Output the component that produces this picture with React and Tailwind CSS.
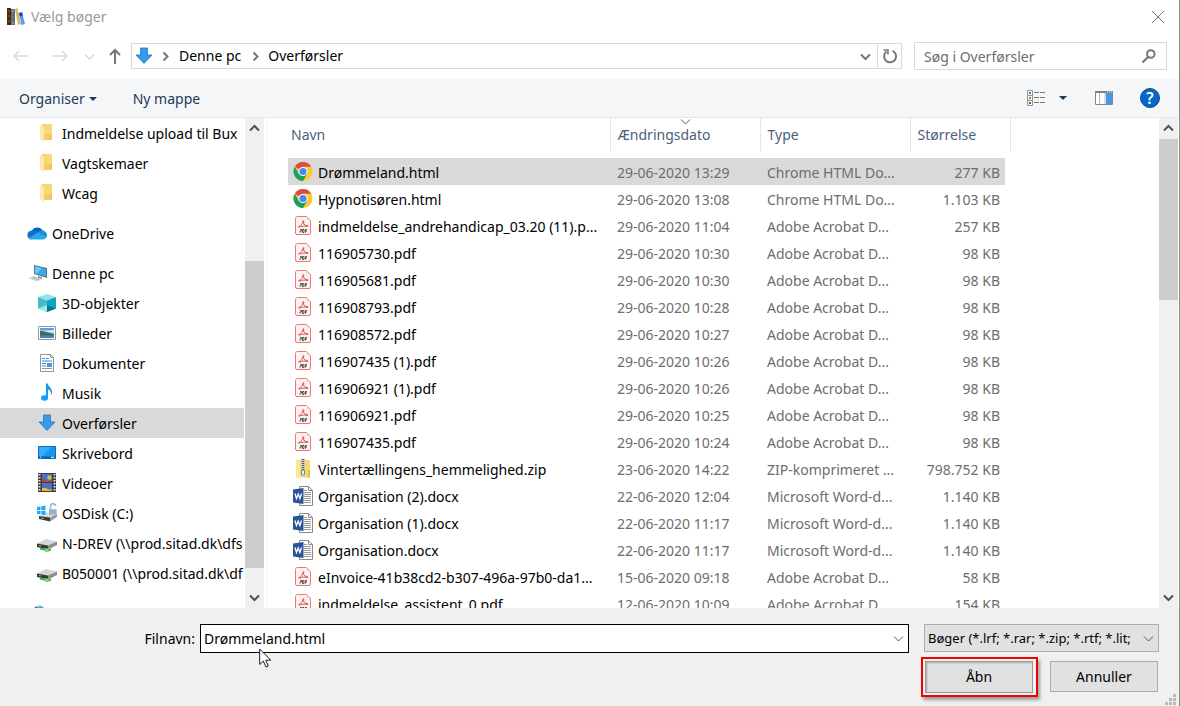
import { useState } from 'react';

const PLACES = [
  { label: 'Indmeldelse upload til Bux', icon: 'folder', level: 1 },
  { label: 'Vagtskemaer', icon: 'folder', level: 1 },
  { label: 'Wcag', icon: 'folder', level: 1 },
  { label: 'OneDrive', icon: 'onedrive', level: 0 },
  { label: 'Denne pc', icon: 'pc', level: 0 },
  { label: '3D-objekter', icon: 'cube', level: 1 },
  { label: 'Billeder', icon: 'pictures', level: 1 },
  { label: 'Dokumenter', icon: 'document', level: 1 },
  { label: 'Musik', icon: 'music', level: 1 },
  { label: 'Overførsler', icon: 'download', level: 1 },
  { label: 'Skrivebord', icon: 'desktop', level: 1 },
  { label: 'Videoer', icon: 'video', level: 1 },
  { label: 'OSDisk (C:)', icon: 'osdisk', level: 1 },
  { label: 'N-DREV (\\\\prod.sitad.dk\\dfs', icon: 'netdrive', level: 1 },
  { label: 'B050001 (\\\\prod.sitad.dk\\df', icon: 'netdrive', level: 1 },
];

const FILES = [
  { name: 'Drømmeland.html', date: '29-06-2020 13:29', type: 'Chrome HTML Do...', size: '277 KB', icon: 'chrome' },
  { name: 'Hypnotisøren.html', date: '29-06-2020 13:08', type: 'Chrome HTML Do...', size: '1.103 KB', icon: 'chrome' },
  { name: 'indmeldelse_andrehandicap_03.20 (11).p...', date: '29-06-2020 11:04', type: 'Adobe Acrobat D...', size: '257 KB', icon: 'pdf' },
  { name: '116905730.pdf', date: '29-06-2020 10:30', type: 'Adobe Acrobat D...', size: '98 KB', icon: 'pdf' },
  { name: '116905681.pdf', date: '29-06-2020 10:30', type: 'Adobe Acrobat D...', size: '98 KB', icon: 'pdf' },
  { name: '116908793.pdf', date: '29-06-2020 10:28', type: 'Adobe Acrobat D...', size: '98 KB', icon: 'pdf' },
  { name: '116908572.pdf', date: '29-06-2020 10:27', type: 'Adobe Acrobat D...', size: '98 KB', icon: 'pdf' },
  { name: '116907435 (1).pdf', date: '29-06-2020 10:26', type: 'Adobe Acrobat D...', size: '98 KB', icon: 'pdf' },
  { name: '116906921 (1).pdf', date: '29-06-2020 10:26', type: 'Adobe Acrobat D...', size: '98 KB', icon: 'pdf' },
  { name: '116906921.pdf', date: '29-06-2020 10:25', type: 'Adobe Acrobat D...', size: '98 KB', icon: 'pdf' },
  { name: '116907435.pdf', date: '29-06-2020 10:24', type: 'Adobe Acrobat D...', size: '98 KB', icon: 'pdf' },
  { name: 'Vintertællingens_hemmelighed.zip', date: '23-06-2020 14:22', type: 'ZIP-komprimeret ...', size: '798.752 KB', icon: 'zip' },
  { name: 'Organisation (2).docx', date: '22-06-2020 12:04', type: 'Microsoft Word-d...', size: '1.140 KB', icon: 'word' },
  { name: 'Organisation (1).docx', date: '22-06-2020 11:17', type: 'Microsoft Word-d...', size: '1.140 KB', icon: 'word' },
  { name: 'Organisation.docx', date: '22-06-2020 11:17', type: 'Microsoft Word-d...', size: '1.140 KB', icon: 'word' },
  { name: 'eInvoice-41b38cd2-b307-496a-97b0-da1...', date: '15-06-2020 09:18', type: 'Adobe Acrobat D...', size: '58 KB', icon: 'pdf' },
  { name: 'indmeldelse_assistent_0.pdf', date: '12-06-2020 10:09', type: 'Adobe Acrobat D...', size: '154 KB', icon: 'pdf' },
];

const ICONS = {
  folder: (
    <>
      <path d="M5 1h8v16H5Z" fill="#f3cd69" />
      <path d="M12 10h3v7h-3Z" fill="#f0c75c" />
      <path d="M6 1h9v10H6Z" fill="#f8d775" />
      <path d="M3 1.500 7 4v15l-4-2.500Z" fill="#fde9a9" />
    </>
  ),
  onedrive: (
    <>
      <path d="M5 7.500a6 6 0 0 1 10.500 0L18 11 8 15 3 10Z" fill="#0364b8" />
      <path d="M5 7.500c2-.8 4-.3 6 1.500L4 16.500C-1 15.500-1 8 5 7.500Z" fill="#0f6fd0" />
      <path d="M15.500 7.500c2.500 0 4.500 2.500 4.500 4.500 0 1-.3 2-1 2.500L10 9.500c1.500-1.500 3.500-2 5.500-2Z" fill="#1490df" />
      <path d="M1.500 15 11 9.500l8.500 4.500c-.8 1.700-2 2.500-3.500 2.500H4.500c-1.200 0-2.200-.500-3-1.500Z" fill="#28a8ea" />
    </>
  ),
  pc: (
    <>
      <path d="M7 2 20 5v10L7 11Z" fill="#5b7283" />
      <path d="M8 3.300 19 5.900v7.700L8 10.200Z" fill="#36aaf0" />
      <path d="M8 3.300 15 5l-5 5.800-2-.6Z" fill="#6cc6fa" />
      <path d="M11 13l4 1v2l-4-1Z" fill="#8b949b" />
      <path d="M1 15 7 13l8 3-5 2.500Z" fill="#cfd4d8" />
      <path d="M4 15l8 2M6 14l7 2.500" stroke="#a9b0b5" strokeWidth=".6" />
    </>
  ),
  cube: (
    <>
      <path d="M1 4 10 1l9 3-9 3.500Z" fill="#8fe3ea" />
      <path d="M1 4l9 3.500V19l-9-3.500Z" fill="#45bccb" />
      <path d="M19 4l-9 3.500V19l9-3.500Z" fill="#0aa3c2" />
      <path d="M1 15.500 10 12v7Z" fill="#9ce9ee" />
      <path d="M19 15.500 10 12v7Z" fill="#067b8a" />
    </>
  ),
  pictures: (
    <>
      <path d="M1.500 3.500h17v13h-17Z" fill="#fff" stroke="#8e979d" />
      <path d="M3 5h14v10H3Z" fill="#9ccaf2" />
      <path d="M3 5h14v2H3Z" fill="#5a9fe0" />
      <path d="M3 8c5 0 8 2 14 3v2H3Z" fill="#406a5c" />
      <path d="M3 12.500h14V15H3Z" fill="#4d86ac" />
      <path d="M8 9c3-1 5-1 9-2v2Z" fill="#e4f1fb" />
    </>
  ),
  document: (
    <>
      <path d="M3.500 1.500h10l3 3v14h-13Z" fill="#fff" stroke="#8e979d" />
      <path d="M13.500 1.500v3h3" fill="none" stroke="#8e979d" />
      <path d="M5 5.500h3M9 5.500h3M5 8h10M5 10.500h4M5 13h4" stroke="#2f91cf" strokeWidth="1.200" />
      <path d="M10 10h5v4h-5Z" fill="#5c8ec7" />
      <path d="M5 15.500h10" stroke="#8e979d" />
    </>
  ),
  music: (
    <>
      <ellipse cx="7.500" cy="15" rx="3.500" ry="2.800" fill="#129df2" />
      <path d="M9 .5h1.800c.5 3.500 5 4.500 4.200 9.500-.2 1-.6 1.600-1.100 2.200.8-3.700-1-5.200-2.900-5.700v8.500H9Z" fill="#129df2" />
    </>
  ),
  download: <path d="M6.500 2h7v7H18l-8 8.500L2 9h4.500Z" fill="#3a9aea" stroke="#2277c0" strokeWidth=".8" />,
  desktop: (
    <>
      <path d="M1.500 3.500h17v12h-17Z" fill="#1697f5" stroke="#0b6fb8" />
      <path d="M2 4h12L5 14H2Z" fill="#36aeff" />
      <path d="M2 13.500h16V15H2Z" fill="#06639f" />
      <path d="M3 14.300h1M14 14.300h3" stroke="#fff" />
    </>
  ),
  video: (
    <>
      <path d="M1 0h18v19H1Z" fill="#3d3d3d" />
      <path d="M5 1h10v8H5ZM5 10h10v8H5Z" fill="#3f74dc" />
      <path d="M2.500 1v17M17.500 1v17" stroke="#e8e8e8" strokeWidth="2" strokeDasharray="1.500 1.500" />
      <circle cx="12.500" cy="4.500" r="2.200" fill="#e9b52c" />
      <path d="M5 6c2-2 4 0 4 2l6-1v2H5Z" fill="#bd4734" />
      <path d="M10 11l3 3-3 1Z" fill="#cf4b2d" />
      <path d="M5 15h4l2 1.500h4V18H5Z" fill="#e7bc3b" />
    </>
  ),
  osdisk: (
    <>
      <path d="M2 13l8-3.500 10 1-7 4Z" fill="#dadada" />
      <path d="M2 13l11 1.500V18.500L2 16Z" fill="#3a3a3a" />
      <path d="M13 14.500l7-4v3.500l-7 4.500Z" fill="#999" />
      <path d="M4 15l3 .6" stroke="#46d65a" />
      <path d="M0 4 3.500 3.500V7H0ZM4.300 3.400 8.500 2.500V7H4.300ZM0 7.800h3.500v3.500L0 10.800ZM4.300 7.800h4.200v4.300l-4.200-.7Z" fill="#1cabec" />
      <path d="M13.500 6V3c0-3 5-3 5 0" fill="none" stroke="#a8b2b8" strokeWidth="1.500" />
      <path d="M12 6h7.500v6H12Z" fill="#a9c3d6" />
      <path d="M12 8h7.500M12 10h7.500" stroke="#7795aa" strokeWidth=".7" />
    </>
  ),
  netdrive: (
    <>
      <path d="M0 10.500 9 6 20 8.500 11 12.500Z" fill="#d4d4d4" />
      <path d="M0 10.500 11 12.500v4L0 14Z" fill="#3a3a3a" />
      <path d="M11 12.500 20 8.500V12l-9 4.500Z" fill="#8d8d8d" />
      <path d="M3 15.500l8 2 3-1" fill="none" stroke="#35b34a" strokeWidth="2" />
      <path d="M8 15.500h3.500v3.500H8Z" fill="#7ddc86" />
      <path d="M2 12.500l2 .4" stroke="#55e069" />
    </>
  ),
  network: (
    <>
      <circle cx="12" cy="9" r="6.500" fill="#5fa9c6" />
      <path d="M8 5c2-2 4-1 4 1l-2 3H7ZM14 4l3 3-2 3Z" fill="#2a7592" />
      <path d="M9 3.500 12 3v1.500Z" fill="#d9edf4" />
    </>
  ),
  chrome: (
    <>
      <circle cx="10" cy="9.500" r="9.500" fill="#fcc934" />
      <path d="M10 9.500 1.770 4.750A9.500 9.500 0 0 1 18.230 4.750H10Z" fill="#da4f43" />
      <path d="M1.770 4.750A9.500 9.500 0 0 0 10 19L14.100 11.900 10 9.500 5.900 11.900Z" fill="#1ba15f" />
      <circle cx="10" cy="9.500" r="4.600" fill="#fff" />
      <circle cx="10" cy="9.500" r="3.600" fill="#4587f3" />
    </>
  ),
  pdf: (
    <>
      <path d="M4.500.5h9l4 4V17a1.500 1.500 0 0 1-1.500 1.500H4A1.500 1.500 0 0 1 2.500 17V2.500c0-1 .8-2 2-2Z" fill="#f5f3f3" stroke="#f8736d" />
      <path d="M13.500.8v3.700h3.700Z" fill="#fbd8d5" />
      <path d="M6 10.500c2-.7 3.700-2.700 3.900-5 .1-1.800 1.200-1 .8.400-.5 2 .6 3.400 3.700 3.700 1.200.1.900 1.100-.4.900-2.300-.7-4.500-.6-6.800.3-1.200.5-2.200.2-1.200-.3Z" fill="none" stroke="#ef4a40" />
      <path d="M7 13.500h1.500v1.500H7v1.500M9.500 13.500v3h1.500v-3ZM12.500 16.500v-3H14M12.500 15H14" fill="none" stroke="#4a4444" strokeWidth=".9" />
    </>
  ),
  zip: (
    <>
      <path d="M3 1h14v17.500H3Z" fill="#f6da6c" />
      <path d="M3 1h4v17.500H3Z" fill="#fae894" />
      <path d="M15 11h2v7.500h-2Z" fill="#e4bd43" />
      <path d="M8 0h4v18H8Z" fill="#d5d5d0" />
      <path d="M10 0v11" stroke="#555" strokeWidth="2.500" strokeDasharray="1 1" />
      <rect x="8.500" y="11" width="3" height="5" rx="1" fill="#eee" stroke="#666" strokeWidth=".8" />
    </>
  ),
  word: (
    <>
      <path d="M6.500.5h9l4 4v15h-13Z" fill="#fff" stroke="#8a8a8a" />
      <path d="M15.500.5v4h4" fill="none" stroke="#8a8a8a" />
      <path d="M11 4.500h3M11 6.500h7M11 8.500h7M11 10.500h7M11 12.500h7M11 14.500h7M11 16.500h7" stroke="#9a9a9a" />
      <path d="M0 3.500 10.500 2v16L0 16.500Z" fill="#2a5699" />
      <path d="M2 7.500l1.500 5L5.200 8l1.700 4.500 1.600-5" fill="none" stroke="#fff" strokeWidth="1.300" />
    </>
  ),
};

function Icon({ name, className = '' }) {
  return (
    <svg viewBox="0 0 20 20" className={`h-5 w-5 shrink-0 ${className}`} aria-hidden="true">
      {ICONS[name]}
    </svg>
  );
}

function Chevron({ dir = 'down', className = '', width = 1 }) {
  const paths = { down: 'M1 3.500 5.500 8 10 3.500', up: 'M1 7.500 5.500 3 10 7.500', right: 'M3.500 1.500 7.500 5.500 3.500 9.500' };
  return (
    <svg viewBox="0 0 11 11" className={`h-[11px] w-[11px] shrink-0 ${className}`} fill="none" stroke="currentColor" strokeWidth={width} aria-hidden="true">
      <path d={paths[dir]} />
    </svg>
  );
}

function Scrollbar({ before, thumb }) {
  return (
    <div className="flex w-[19px] shrink-0 flex-col bg-[#f0f0f0] text-[#505050]">
      <button type="button" aria-label="Rul op" className="flex h-[21px] items-center justify-center">
        <Chevron dir="up" width={2} />
      </button>
      <div className="flex-1">
        <div style={{ height: before }} />
        <div className="bg-[#cdcdcd]" style={{ height: thumb }} />
      </div>
      <button type="button" aria-label="Rul ned" className="flex h-[21px] items-center justify-center">
        <Chevron width={2} />
      </button>
    </div>
  );
}

function TitleBar() {
  return (
    <header className="flex h-[33px] shrink-0 items-center pl-[7px] pr-[14px]">
      <svg viewBox="0 0 18 18" className="h-[18px] w-[18px]" aria-hidden="true">
        <path d="M0 0h4v17H0Z" fill="#4a2415" />
        <path d="M.5 3h3M.5 8h3M.5 13h3" stroke="#a1602e" />
        <path d="M4 1h4v16H4Z" fill="#5c7474" />
        <path d="M5 3h2M5 15h2" stroke="#a9bdb8" />
        <path d="M8 1l2.500-1L14 16l-3 1Z" fill="#dcb765" />
        <path d="M12 5l3-.8L18 16l-3.500 1Z" fill="#5b9bf5" />
        <path d="M12 5l3-.8.8 3.500-3 .8Z" fill="#1d3fa8" />
      </svg>
      <h1 className="ml-[6px] text-[14px] text-[#999]">Vælg bøger</h1>
      <button type="button" aria-label="Luk" className="ml-auto text-[#777]">
        <svg viewBox="0 0 14 14" className="h-[14px] w-[14px]" stroke="currentColor" aria-hidden="true">
          <path d="M1 1l12 12M13 1 1 13" />
        </svg>
      </button>
    </header>
  );
}

function NavBar() {
  return (
    <nav className="flex h-[46px] shrink-0 items-center pr-[12px]">
      <div className="flex w-[131px] shrink-0 items-center pl-[13px] text-[#d9d9d9]">
        <button type="button" aria-label="Tilbage">
          <svg viewBox="0 0 16 12" className="h-3 w-4" fill="none" stroke="currentColor" strokeWidth="1.500">
            <path d="M15.500 6H1M6 1 1 6l5 5" />
          </svg>
        </button>
        <button type="button" aria-label="Frem" className="ml-[23px]">
          <svg viewBox="0 0 16 12" className="h-3 w-4" fill="none" stroke="currentColor" strokeWidth="1.500">
            <path d="M.5 6H15M10 1l5 5-5 5" />
          </svg>
        </button>
        <button type="button" aria-label="Seneste placeringer" className="ml-4">
          <Chevron width={1.5} />
        </button>
        <button type="button" aria-label="Op" className="ml-[13px] text-[#777]">
          <svg viewBox="0 0 14 16" className="h-4 w-[14px]" fill="none" stroke="currentColor" strokeWidth="2">
            <path d="M7 16V2M2 7l5-5 5 5" />
          </svg>
        </button>
      </div>
      <div className="flex h-[26px] flex-1 items-center border border-[#d9d9d9]">
        <Icon name="download" className="ml-[2px]" />
        <Chevron dir="right" width={2} className="ml-[6px] text-[#777]" />
        <button type="button" className="ml-2">Denne pc</button>
        <Chevron dir="right" width={2} className="ml-[9px] text-[#777]" />
        <button type="button" className="ml-[7px]">Overførsler</button>
        <button type="button" aria-label="Tidligere placeringer" className="ml-auto mr-[6px] text-[#777]">
          <Chevron width={2} />
        </button>
        <button type="button" aria-label="Opdater" className="flex h-full w-6 items-center justify-center border-l border-[#d9d9d9] text-[#777]">
          <svg viewBox="0 0 16 16" className="h-4 w-4" fill="none" stroke="currentColor" strokeWidth="2">
            <path d="M10.500 2.800A6 6 0 1 1 4.500 3.500" />
            <path d="M1.500 2h4.500v4.500" strokeWidth="1.600" />
          </svg>
        </button>
      </div>
      <div className="ml-3 flex h-7 w-[253px] items-center border border-[#d9d9d9] pl-[9px] pr-[9px]">
        <input type="search" aria-label="Søg i Overførsler" placeholder="Søg i Overførsler" className="min-w-0 flex-1 pt-[2px] outline-none placeholder:text-[#6d6d6d]" />
        <svg viewBox="0 0 16 16" className="h-4 w-4 shrink-0 text-[#777]" fill="none" stroke="currentColor" aria-hidden="true">
          <circle cx="9.800" cy="6" r="3.800" strokeWidth="2" />
          <path d="M7 9 1.500 14.500" strokeWidth="2.200" />
        </svg>
      </div>
    </nav>
  );
}

function Toolbar() {
  return (
    <div className="flex h-[39px] shrink-0 items-center border-b border-[#e7e8ea] bg-[#f5f6f7] pl-[19px] pr-[19px] text-[#1e395b]">
      <button type="button" className="flex items-center pt-[2px]">
        Organiser
        <svg viewBox="0 0 8 4" className="ml-1 h-1 w-2" fill="currentColor" aria-hidden="true">
          <path d="M0 0h8L4 4Z" />
        </svg>
      </button>
      <button type="button" className="ml-9 pt-[2px]">Ny mappe</button>
      <button type="button" aria-label="Visning" className="ml-auto flex items-center">
        <svg viewBox="0 0 18 16" className="h-4 w-[18px]" fill="none" aria-hidden="true">
          <path d="M.5.5h5v15h-5ZM.5 5.500h5M.5 10.500h5" stroke="#949494" />
          <path d="M7 2.500h5M13 2.500h5M7 7.500h5M13 7.500h5M7 12.500h5M13 12.500h5" stroke="#777" />
          <path d="M2 2h2v2H2Z" fill="#3b86d4" />
          <path d="M2 7h2v2H2Z" fill="#a58a2e" />
          <path d="M2 12h2v2H2Z" fill="#cf3a23" />
        </svg>
        <svg viewBox="0 0 8 4" className="ml-[14px] h-1 w-2" fill="currentColor" aria-hidden="true">
          <path d="M0 0h8L4 4Z" />
        </svg>
      </button>
      <button type="button" aria-label="Vis eksempelrude" className="ml-7">
        <svg viewBox="0 0 18 14" className="h-[14px] w-[18px]" aria-hidden="true">
          <path d="M.5.5h17v13H.5Z" fill="#fff" stroke="#85898d" />
          <path d="M0 0h18v2H0Z" fill="#7d8185" />
          <path d="M12 1h1M14 1h1M16 1h1" stroke="#fff" />
          <path d="M4.500 2v11M10 2v11" stroke="#b5b8ba" />
          <path d="M11 2h6v11h-6Z" fill="#3f99e6" />
        </svg>
      </button>
      <button type="button" aria-label="Hjælp" className="ml-[27px] flex h-5 w-5 items-center justify-center rounded-full border border-[#0a4b8c] bg-[#0667c6] text-[16px] font-semibold text-white">
        ?
      </button>
    </div>
  );
}

function Sidebar() {
  return (
    <aside className="flex w-[264px] shrink-0">
      <ul className="min-w-0 flex-1 overflow-hidden">
        {PLACES.map((place) => (
          <li key={place.label} className={place.level === 0 ? 'mt-[10px]' : ''}>
            <button
              type="button"
              className={`flex h-[30px] w-[244px] items-center gap-[5px] overflow-hidden whitespace-nowrap ${
                place.level === 0 ? 'pl-[27px]' : 'pl-[37px]'
              } ${place.label === 'Overførsler' ? 'bg-[#d9d9d9]' : ''}`}
            >
              <Icon name={place.icon} />
              <span className="pt-[2px]">{place.label}</span>
            </button>
          </li>
        ))}
        <li className="mt-[10px] flex h-[30px] items-center pl-[27px]">
          <Icon name="network" />
        </li>
      </ul>
      <Scrollbar before={122} thumb={307} />
    </aside>
  );
}

function FileList({ selected, onSelect }) {
  return (
    <main className="ml-[3px] flex min-w-0 flex-1 border-l border-[#f3f3f3] pr-px">
      <div className="min-w-0 flex-1 overflow-hidden pl-[20px]">
        <table className="w-[722px] table-fixed border-collapse whitespace-nowrap text-left">
          <colgroup>
            <col className="w-[322px]" />
            <col className="w-[150px]" />
            <col className="w-[150px]" />
            <col className="w-[95px]" />
            <col className="w-[5px]" />
          </colgroup>
          <thead className="text-[#4c607a]">
            <tr className="h-[33px]">
              <th className="border-r border-[#e5e5e5] p-0 pl-[3px] font-normal">Navn</th>
              <th className="relative border-r border-[#e5e5e5] p-0 pl-[7px] font-normal" aria-sort="descending">
                <Chevron className="absolute left-[69px] top-[-2px]" />
                Ændringsdato
              </th>
              <th className="border-r border-[#e5e5e5] p-0 pl-[7px] font-normal">Type</th>
              <th colSpan="2" className="border-r border-[#e5e5e5] p-0 pl-[7px] font-normal">Størrelse</th>
            </tr>
          </thead>
          <tbody className="text-[#6d6d6d]">
            <tr className="h-[7px]" aria-hidden="true">
              <td colSpan="5" className="p-0" />
            </tr>
            {FILES.map((file) => {
              const bg = file.name === selected ? 'bg-[#d9d9d9]' : '';
              return (
                <tr key={file.name} className="h-[27px]" onClick={() => onSelect(file.name)}>
                  <td className={`p-0 pl-[5px] text-black ${bg}`}>
                    <div className="flex items-center gap-[5px]">
                      <Icon name={file.icon} />
                      <span className="pt-[2px]">{file.name}</span>
                    </div>
                  </td>
                  <td className={`p-0 pl-[7px] pt-[2px] ${bg}`}>{file.date}</td>
                  <td className={`p-0 pl-[7px] pt-[2px] ${bg}`}>{file.type}</td>
                  <td className={`p-0 pr-[5px] pt-[2px] text-right ${bg}`}>{file.size}</td>
                  <td className="p-0" />
                </tr>
              );
            })}
          </tbody>
        </table>
      </div>
      <Scrollbar before={0} thumb={161} />
    </main>
  );
}

function Footer({ fileName, onChange }) {
  return (
    <footer className="flex h-[98px] shrink-0 items-start bg-[#f0f0f0] pt-4">
      <label htmlFor="fileName" className="w-[200px] shrink-0 pr-[5px] text-right leading-[30px]">
        Filnavn:
      </label>
      <div className="relative flex h-[29px] min-w-0 flex-1 items-center border border-black bg-white">
        <input
          id="fileName"
          value={fileName}
          onChange={(e) => onChange(e.target.value)}
          className="h-full min-w-0 flex-1 pl-[3px] outline-none"
        />
        <button type="button" aria-label="Vis filnavne" className="mr-[4px] text-[#555]">
          <Chevron />
        </button>
        <svg viewBox="0 0 13 20" className="absolute left-[58px] top-[23px] h-5 w-[13px]" aria-hidden="true">
          <path d="M.7 1v15.500l3.600-3.400L7 19l2.300-1-2.600-5.800h5Z" fill="#fff" stroke="#1b1b2b" />
        </svg>
      </div>
      <div className="ml-[15px] w-[255px] shrink-0">
        <div className="relative w-[235px]">
          <select aria-label="Filtype" className="block h-7 w-full appearance-none border border-[#adadad] bg-[#e1e1e1] pl-[3px] pr-4 text-[13px]">
            <option>Bøger (*.lrf; *.rar; *.zip; *.rtf; *.lit;</option>
          </select>
          <Chevron className="pointer-events-none absolute right-[5px] top-[9px] text-[#555]" />
        </div>
        <div className="flex pt-[5px]">
          <div className="-ml-[3px] h-[40px] w-[117px] border-2 border-[#f40000] p-[2px] shadow-[2px_3px_3px_rgba(0,0,0,0.35)]">
            <button type="button" className="h-full w-[108px] border border-[#999] bg-[#e1e1e1] shadow-[inset_1px_1px_2px_rgba(0,0,0,0.25)]">Åbn</button>
          </div>
          <button type="button" className="ml-3 mt-1 h-[31px] w-[108px] border border-[#adadad] bg-[#e1e1e1]">Annuller</button>
          <svg viewBox="0 0 11 11" className="-mb-2 ml-[7px] h-[11px] w-[11px] self-end" fill="#b9b9b9" aria-hidden="true">
            <path d="M8 0h3v3H8ZM4 4h3v3H4ZM8 4h3v3H8ZM0 8h3v3H0ZM4 8h3v3H4ZM8 8h3v3H8Z" />
          </svg>
        </div>
      </div>
    </footer>
  );
}

export default function App() {
  const [selected, setSelected] = useState('Drømmeland.html');

  return (
    <div className="flex h-screen flex-col overflow-hidden border-r border-[#8c8c8c] bg-white font-['Noto_Sans','Open_Sans',sans-serif] text-[14px] leading-5 text-black">
      <TitleBar />
      <NavBar />
      <Toolbar />
      <div className="flex min-h-0 flex-1">
        <Sidebar />
        <FileList selected={selected} onSelect={setSelected} />
      </div>
      <Footer fileName={selected} onChange={setSelected} />
    </div>
  );
}
